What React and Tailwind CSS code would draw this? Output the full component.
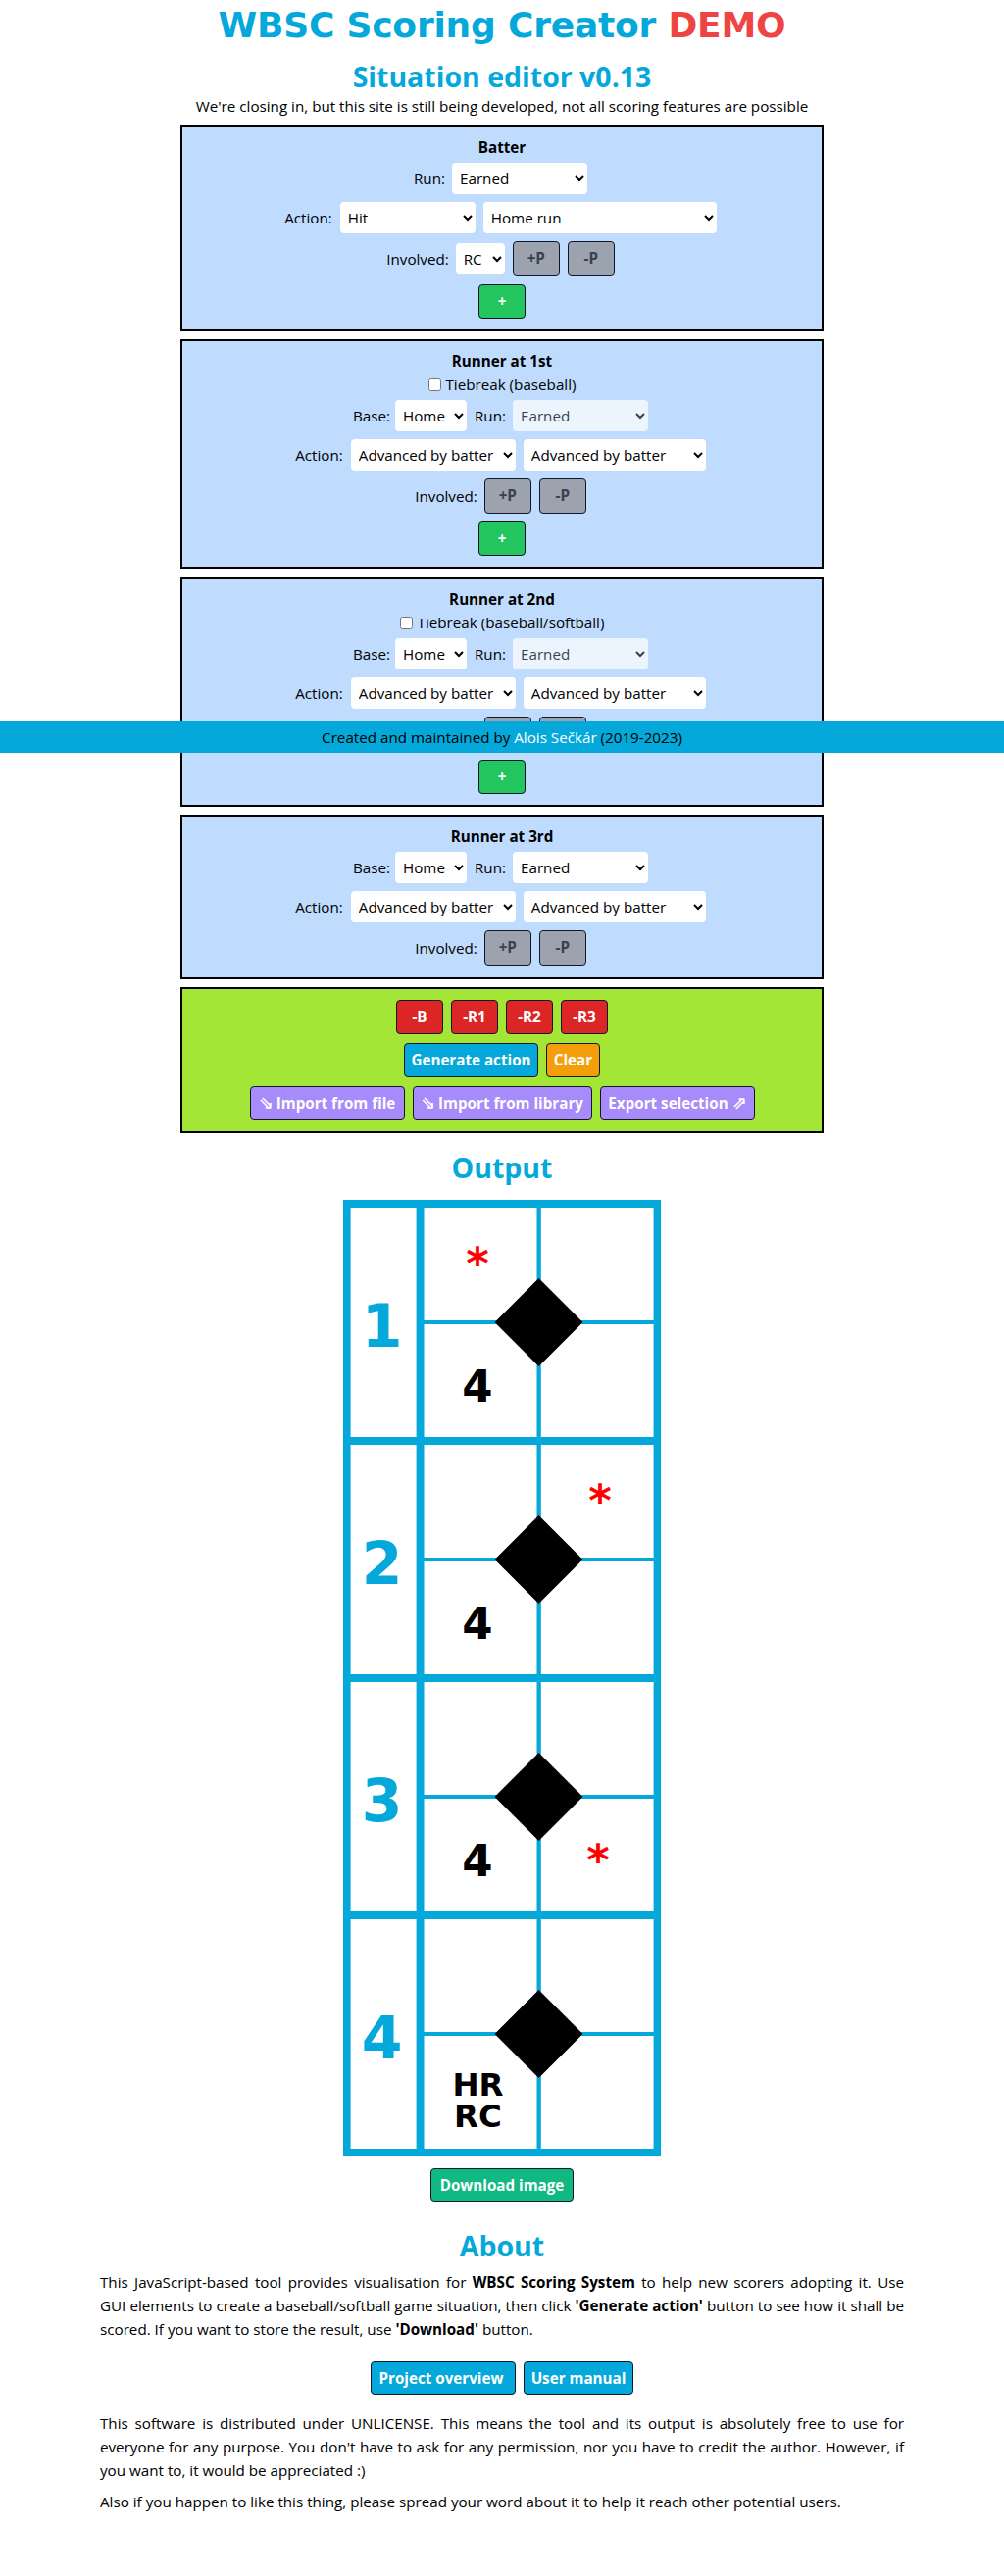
import React from "react";

const CYAN = "#04a8da";

function Btn({ className, children }) {
  return (
    <button
      className={`flex shrink-0 items-center justify-center whitespace-nowrap rounded border border-gray-900 pb-px font-bold leading-6 ${className}`}
    >
      {children}
    </button>
  );
}

function Select({ className, value, disabled }) {
  return (
    <select
      disabled={disabled}
      className={`h-8 shrink-0 rounded bg-white p-1 text-black disabled:opacity-70 ${className}`}
    >
      <option>{value}</option>
    </select>
  );
}

function Panel({ title, className = "mt-2", children }) {
  return (
    <section
      className={`box-border w-[656px] border-2 border-black bg-[#bfdbfe] pt-2 ${className}`}
    >
      <h3 className="h-6 text-center font-bold">{title}</h3>
      {children}
    </section>
  );
}

function Row({ className = "h-10 pr-[3px]", children }) {
  return <div className={`flex items-center justify-center gap-2 ${className}`}>{children}</div>;
}

function Involved({ children }) {
  return (
    <Row className="h-11 pb-px pr-[3px]">
      <span className="w-[62.5px]">Involved:</span>
      {children}
      <Btn className="h-9 w-12 bg-[#9ca3af] text-[#374151]">+P</Btn>
      <Btn className="h-9 w-12 bg-[#9ca3af] text-[#374151]">-P</Btn>
    </Row>
  );
}

function Plus() {
  return (
    <Row className="h-11 pb-px">
      <Btn className="h-[35px] w-12 bg-[#22c55e] text-white">+</Btn>
    </Row>
  );
}

function Runner({ title, tiebreak, earnedDisabled, plus, className }) {
  return (
    <Panel title={title} className={className}>
      {tiebreak && (
        <label className="flex h-6 items-center justify-center gap-[5px]">
          <input type="checkbox" className="h-[13px] w-[13px]" />
          <span>{tiebreak}</span>
        </label>
      )}
      <Row>
        <span className="w-[35px] whitespace-nowrap">Base:</span>
        <Select className="w-[73px]" value="Home" />
        <span className="w-[31px] whitespace-nowrap">Run:</span>
        <Select className="w-[138px]" value="Earned" disabled={earnedDisabled} />
      </Row>
      <Row>
        <span>Action:</span>
        <Select className="w-[168px]" value="Advanced by batter" />
        <Select className="w-[186px]" value="Advanced by batter" />
      </Row>
      <Involved />
      {plus && <Plus />}
    </Panel>
  );
}

const PLAYS = [
  { n: 1, star: [137, 75] },
  { n: 2, star: [262, 75] },
  { n: 3, star: [260, 200] },
  { n: 4 },
];

function ScoreSheet() {
  return (
    <svg
      width="324"
      height="976"
      viewBox="0 0 324 976"
      className="mt-[15px] block shrink-0"
      fontFamily='"DejaVu Sans", sans-serif'
      fontWeight="bold"
      textAnchor="middle"
    >
      <rect width="324" height="976" fill={CYAN} />
      {PLAYS.map(({ n, star }, i) => (
        <g key={n} transform={`translate(0 ${i * 242})`}>
          <rect x="7.6" y="8" width="67" height="234" fill="#fff" />
          <rect x="82.5" y="8" width="115" height="115" fill="#fff" />
          <rect x="201.8" y="8" width="114.8" height="115" fill="#fff" />
          <rect x="82.5" y="127" width="115" height="115" fill="#fff" />
          <rect x="201.8" y="127" width="114.8" height="115" fill="#fff" />
          <path d="M199.5 80L244.5 125L199.5 170L154.5 125Z" fill="#000" />
          <text x="39.5" y="150" fontSize="60" fill={CYAN}>{n}</text>
          {star ? (
            <>
              <text x="137" y="206" fontSize="45">4</text>
              <text x={star[0]} y={star[1] + 5} fontSize="45" fill="#f00">*</text>
            </>
          ) : (
            <>
              <text x="137.5" y="188" fontSize="32.5">HR</text>
              <text x="137.5" y="219.6" fontSize="32.5">RC</text>
            </>
          )}
        </g>
      ))}
    </svg>
  );
}

function Arrow({ char }) {
  return <span className="inline-block w-[14px] font-['DejaVu_Sans'] text-[18px] font-bold leading-5">{char}</span>;
}

export default function App() {
  return (
    <div className="relative flex h-[2628px] w-full flex-col items-center bg-white font-['Open_Sans',sans-serif] text-[15.2px] leading-6 text-black">
      <h1 className="mt-[6px] h-10 whitespace-nowrap font-['DejaVu_Sans',sans-serif] text-[36px] font-bold leading-10 tracking-[-0.2px] text-[#04a8da]">
        WBSC Scoring Creator <span className="text-[#ef4444]">DEMO</span>
      </h1>
      <h2 className="mt-[14px] text-[28.5px] font-bold leading-9 text-[#04a8da]">Situation editor v0.13</h2>
      <p>We're closing in, but this site is still being developed, not all scoring features are possible</p>

      <Panel title="Batter" className="mt-2 h-[210px]">
        <Row>
          <span className="w-[31px] whitespace-nowrap">Run:</span>
          <Select className="w-[138px]" value="Earned" />
        </Row>
        <Row>
          <span>Action:</span>
          <Select className="w-[138px]" value="Hit" />
          <Select className="w-[238px]" value="Home run" />
        </Row>
        <Involved>
          <Select className="w-[50px]" value="RC" />
        </Involved>
        <Plus />
      </Panel>

      <Runner title="Runner at 1st" tiebreak="Tiebreak (baseball)" earnedDisabled plus className="mt-2 h-[234px]" />
      <Runner title="Runner at 2nd" tiebreak="Tiebreak (baseball/softball)" earnedDisabled plus className="mt-[9px] h-[234px]" />
      <Runner title="Runner at 3rd" className="mt-2 h-[168px]" />

      <section className="mt-2 h-[149px] w-[656px] border-2 border-black bg-[#a3e635] pt-[7px] text-white">
        <Row className="h-[43px]">
          {["-B", "-R1", "-R2", "-R3"].map((t) => (
            <Btn key={t} className="h-[35px] w-12 bg-[#dc2626]">{t}</Btn>
          ))}
        </Row>
        <Row className="h-11">
          <Btn className="h-[35px] w-[137px] bg-[#04a8da]">Generate action</Btn>
          <Btn className="h-[35px] w-[55px] bg-[#f59e0b]">Clear</Btn>
        </Row>
        <Row className="h-11">
          <Btn className="h-[35px] w-[158px] gap-1 bg-[#a78bfa]"><Arrow char="⇘" />Import from file</Btn>
          <Btn className="h-[35px] w-[183px] gap-1 bg-[#a78bfa]"><Arrow char="⇘" />Import from library</Btn>
          <Btn className="h-[35px] w-[158px] gap-1 bg-[#a78bfa]">Export selection<Arrow char="⇗" /></Btn>
        </Row>
      </section>

      <h2 className="mt-[17px] text-[28.5px] font-bold leading-9 text-[#04a8da]">Output</h2>
      <ScoreSheet />
      <Btn className="mt-3 h-[34px] w-[146px] bg-[#10b981] text-white">Download image</Btn>

      <h2 className="mt-[27px] text-[28.5px] font-bold leading-9 text-[#04a8da]">About</h2>
      <div className="mt-[7px] w-[820px]">
        <p className="[text-align-last:justify]">
          This JavaScript-based tool provides visualisation for <b>WBSC Scoring System</b> to help new scorers adopting it. Use
        </p>
        <p className="whitespace-nowrap [text-align-last:justify]">
          GUI elements to create a baseball/softball game situation, then click <b>'Generate action'</b> button to see how it shall be
        </p>
        <p>
          scored. If you want to store the result, use <b>'Download'</b> button.
        </p>
      </div>
      <div className="mt-[21px] flex gap-2 text-white">
        <Btn className="h-[34px] w-[148px] bg-[#04a8da] pr-1">Project overview</Btn>
        <Btn className="h-[34px] w-[112px] bg-[#04a8da]">User manual</Btn>
      </div>
      <p className="mt-[17px] w-[820px] text-justify">
        This software is distributed under UNLICENSE. This means the tool and its output is absolutely free to use for
        everyone for any purpose. You don't have to ask for any permission, nor you have to credit the author.
        However, if you want to, it would be appreciated :)
      </p>
      <p className="mt-2 w-[820px] text-justify">
        Also if you happen to like this thing, please spread your word about it to help it reach other potential users.
      </p>

      <footer className="absolute left-0 top-[736px] h-8 w-full bg-[#04a8da] text-center leading-8">
        Created and maintained by <a className="text-white">Alois Sečkár</a> (2019-2023)
      </footer>
    </div>
  );
}
